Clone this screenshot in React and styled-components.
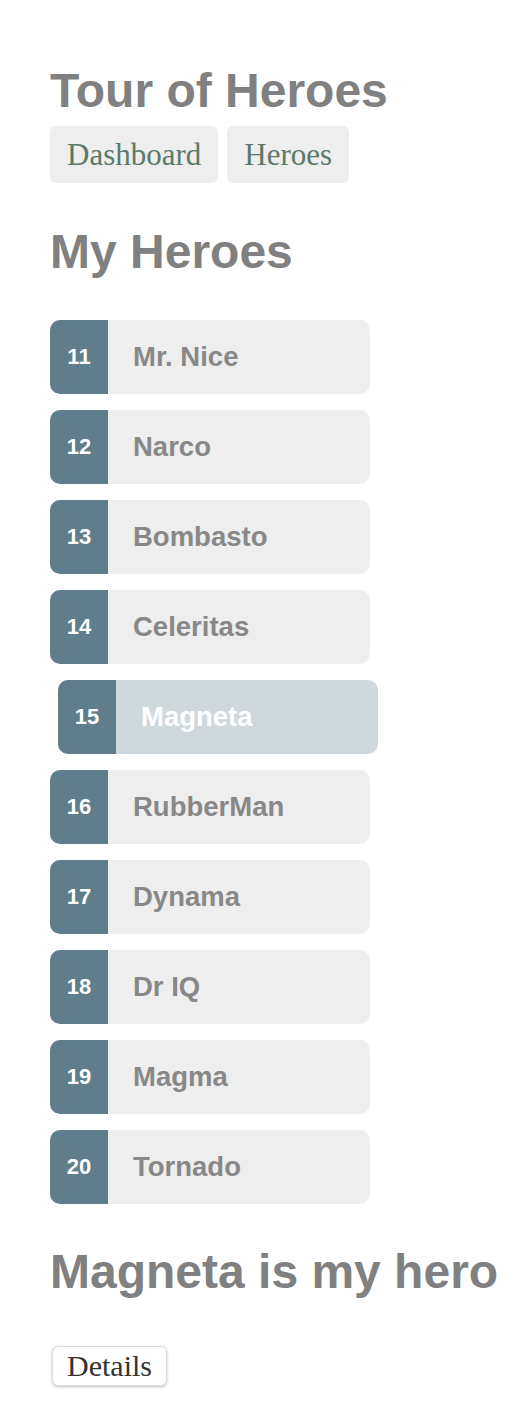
import React, { useState } from "react";
import styled, { createGlobalStyle } from "styled-components";

const GlobalStyle = createGlobalStyle`
  body {
    margin: 0;
    background: #fff;
    font-family: "Liberation Sans", Arial, sans-serif;
  }
`;

const Page = styled.div`
  padding: 67px 0 40px 50px;
`;

const Title = styled.h1`
  margin: 0;
  font-size: 48px;
  line-height: 47px;
  font-weight: bold;
  color: #808080;
`;

const Heading = styled.h2`
  margin: ${(p) => p.$top || 0}px 0 0;
  font-size: 48px;
  line-height: 47px;
  font-weight: bold;
  color: #808080;
  white-space: nowrap;
`;

const Nav = styled.nav`
  display: flex;
  gap: 9px;
  margin-top: 12px;
`;

const NavLink = styled.a`
  display: flex;
  align-items: center;
  height: 57px;
  padding: 0 17px;
  box-sizing: border-box;
  background: #eee;
  border-radius: 6px;
  font-family: "Liberation Serif", "DejaVu Serif", serif;
  font-size: 31px;
  color: #5b7a69;
  text-decoration: none;
  cursor: pointer;
`;

const HeroList = styled.ul`
  list-style: none;
  margin: 45px 0 0;
  padding: 0;
  display: flex;
  flex-direction: column;
  gap: 16px;
  width: 320px;
`;

const HeroItem = styled.li`
  display: flex;
  align-items: center;
  height: 74px;
  border-radius: 10px;
  overflow: hidden;
  background: ${(p) => (p.$selected ? "#cfd8dc" : "#eee")};
  color: ${(p) => (p.$selected ? "#fff" : "#888")};
  transform: ${(p) => (p.$selected ? "translateX(8px)" : "none")};
  cursor: pointer;
`;

const Badge = styled.span`
  display: flex;
  align-items: center;
  justify-content: center;
  align-self: stretch;
  width: 58px;
  background: #607d8b;
  color: #fff;
  font-size: 22px;
  font-weight: bold;
`;

const Name = styled.span`
  margin-left: 25px;
  font-size: 27.5px;
  font-weight: bold;
`;

const DetailsButton = styled.button`
  margin-top: 51px;
  margin-left: 2px;
  height: 40px;
  padding: 0 14px;
  background: #fff;
  border: 1px solid #ddd;
  border-radius: 6px;
  box-shadow: 0 1px 3px rgba(0, 0, 0, 0.25);
  font-family: "Liberation Serif", "DejaVu Serif", serif;
  font-size: 30px;
  line-height: 1;
  color: #333;
  cursor: pointer;
`;

const heroes = [
  { id: 11, name: "Mr. Nice" },
  { id: 12, name: "Narco" },
  { id: 13, name: "Bombasto" },
  { id: 14, name: "Celeritas" },
  { id: 15, name: "Magneta" },
  { id: 16, name: "RubberMan" },
  { id: 17, name: "Dynama" },
  { id: 18, name: "Dr IQ" },
  { id: 19, name: "Magma" },
  { id: 20, name: "Tornado" },
];

const App = () => {
  const [selectedId, setSelectedId] = useState(15);
  const selected = heroes.find((h) => h.id === selectedId);

  return (
    <>
      <GlobalStyle />
      <Page>
        <Title>Tour of Heroes</Title>
        <Nav>
          <NavLink>Dashboard</NavLink>
          <NavLink>Heroes</NavLink>
        </Nav>
        <Heading $top={45}>My Heroes</Heading>
        <HeroList>
          {heroes.map((hero) => (
            <HeroItem
              key={hero.id}
              $selected={hero.id === selectedId}
              onClick={() => setSelectedId(hero.id)}
            >
              <Badge>{hero.id}</Badge>
              <Name>{hero.name}</Name>
            </HeroItem>
          ))}
        </HeroList>
        {selected && (
          <>
            <Heading $top={44}>{selected.name} is my hero</Heading>
            <DetailsButton>Details</DetailsButton>
          </>
        )}
      </Page>
    </>
  );
};

export default App;
